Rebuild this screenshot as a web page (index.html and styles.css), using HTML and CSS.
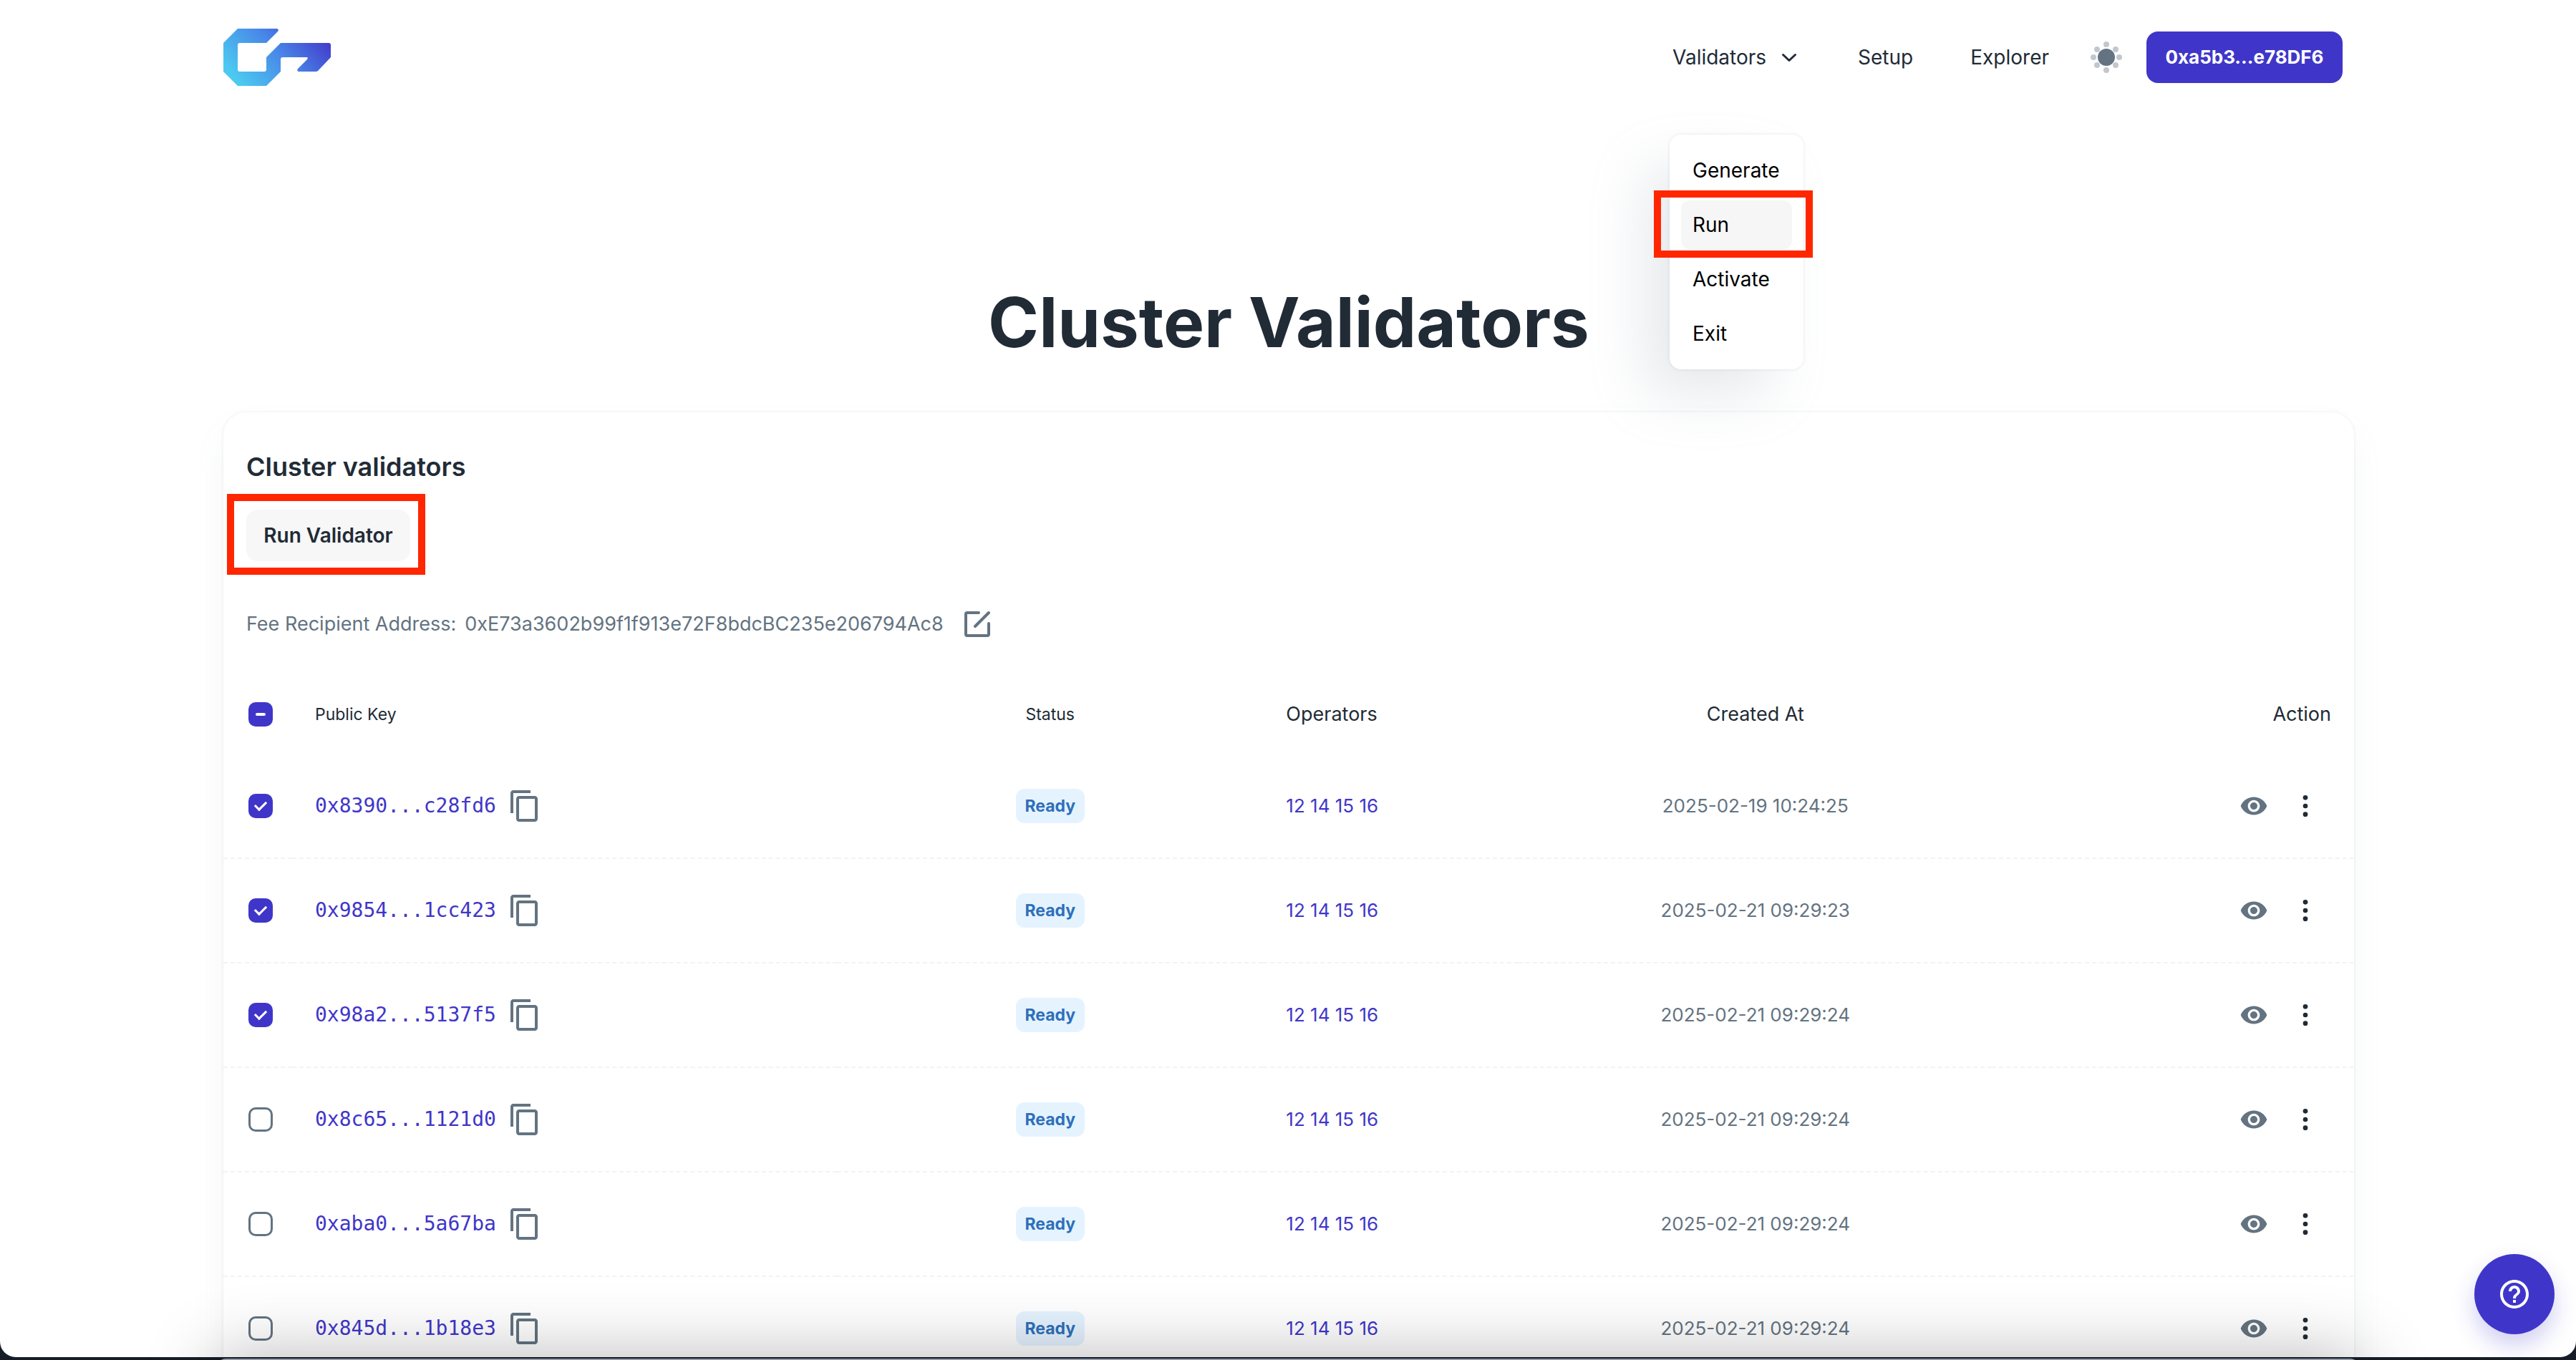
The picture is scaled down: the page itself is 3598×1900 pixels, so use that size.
FILE: index.html
```html
<!DOCTYPE html>
<html lang="en">
<head>
<meta charset="utf-8">
<meta name="viewport" content="width=device-width, initial-scale=1">
<title>Cluster Validators</title>
<link rel="stylesheet" href="styles.css">
</head>
<body>
<svg class="sprite" aria-hidden="true">
  <symbol id="copy" viewBox="0 0 24 24"><path d="M16 1H4c-1.1 0-2 .9-2 2v14h2V3h12V1zm3 4H8c-1.1 0-2 .9-2 2v14c0 1.1.9 2 2 2h11c1.1 0 2-.9 2-2V7c0-1.1-.9-2-2-2zm0 16H8V7h11v14z"/></symbol>
  <symbol id="eye" viewBox="0 0 24 24"><path d="M12 4.500C7 4.500 2.730 7.610 1 12c1.730 4.390 6 7.500 11 7.500s9.270-3.110 11-7.500c-1.730-4.390-6-7.500-11-7.500zM12 17c-2.760 0-5-2.240-5-5s2.240-5 5-5 5 2.240 5 5-2.240 5-5 5zm0-8c-1.660 0-3 1.340-3 3s1.340 3 3 3 3-1.340 3-3-1.340-3-3-3z"/></symbol>
  <symbol id="more" viewBox="0 0 24 24"><circle cx="12" cy="5" r="2"/><circle cx="12" cy="12" r="2"/><circle cx="12" cy="19" r="2"/></symbol>
</svg>

<div class="window">
  <header class="header">
    <a class="logo" href="#" aria-label="Home">
      <svg viewBox="0 0 150 80" width="150" height="80">
        <defs><linearGradient id="brand" gradientUnits="userSpaceOnUse" x1="20" y1="72" x2="122" y2="-16">
          <stop offset="0" stop-color="#4cc9f0"/><stop offset=".5" stop-color="#4888e8"/><stop offset="1" stop-color="#4338ca"/>
        </linearGradient></defs>
        <path fill="url(#brand)" d="M20 0H75Q78 1 76 4L60 20H23Q20 20 20 23V57Q20 60 23 60H57Q60 60 60 57V40L80 20H147Q150 20 150 23V40L132 59Q131 60 129 60H105Q102 59 104 56L117 43Q119 40 116 40H83Q80 40 80 43V60L60 80H20L0 60V20Z"/>
      </svg>
    </a>
    <nav class="nav">
      <div class="nav-item">
        <button class="nav-link" type="button" aria-expanded="true">Validators
          <svg viewBox="0 0 32 32" width="32" height="32"><path d="M7.500 12.500 16 20.500 24.500 12.500" fill="none" stroke="currentColor" stroke-width="3" stroke-linecap="round" stroke-linejoin="round"/></svg>
        </button>
        <div class="menu">
          <a href="#">Generate</a>
          <a class="active" href="#">Run</a>
          <a href="#">Activate</a>
          <a href="#">Exit</a>
          <span class="marker marker-menu"></span>
        </div>
      </div>
      <a class="nav-link" href="#">Setup</a>
      <a class="nav-link" href="#">Explorer</a>
    </nav>
    <button class="icon-button theme" type="button" aria-label="Toggle theme">
      <svg viewBox="0 0 48 48" width="48" height="48">
        <g fill="#c1c7cd"><circle cx="24" cy="6" r="4"/><circle cx="24" cy="42" r="4"/><circle cx="6" cy="24" r="4"/><circle cx="42" cy="24" r="4"/><circle cx="11" cy="13" r="4"/><circle cx="37" cy="13" r="4"/><circle cx="11" cy="35" r="4"/><circle cx="37" cy="35" r="4"/></g>
        <circle cx="24" cy="24" r="12" fill="#637381"/>
      </svg>
    </button>
    <button class="wallet" type="button">0xa5b3...e78DF6</button>
  </header>

  <main class="main">
    <h1>Cluster Validators</h1>
    <section class="card">
      <div class="card-head">
        <h2>Cluster validators</h2>
        <div class="run-wrap">
          <button class="run" type="button">Run Validator</button>
          <span class="marker marker-run"></span>
        </div>
        <div class="fee">
          <span>Fee Recipient Address:</span>
          <span>0xE73a3602b99f1f913e72F8bdcBC235e206794Ac8</span>
          <button class="icon-button edit" type="button" aria-label="Edit fee recipient address">
            <svg viewBox="0 0 48 48" width="48" height="48"><g fill="none" stroke="currentColor" stroke-width="4" stroke-linecap="round" stroke-linejoin="round"><path d="M25 8H9a2 2 0 0 0-2 2V38a2 2 0 0 0 2 2H37a2 2 0 0 0 2-2V23"/><path d="M20 27 39 8"/></g></svg>
          </button>
        </div>
      </div>
      <table class="validators">
        <colgroup><col class="c-check"><col><col class="c-status"><col class="c-ops"><col class="c-date"><col class="c-action"></colgroup>
        <thead>
          <tr>
            <th><input class="check mixed" type="checkbox" aria-label="Select all" aria-checked="mixed"></th>
            <th class="small">Public Key</th><th class="small center">Status</th><th>Operators</th><th class="center">Created At</th><th class="right">Action</th>
          </tr>
        </thead>
        <tbody>
          <tr>
            <td><input class="check" type="checkbox" aria-label="Select 0x8390...c28fd6" checked></td>
            <td><div class="key"><a href="#">0x8390...c28fd6</a><button class="icon-button" type="button" aria-label="Copy"><svg width="48" height="48"><use href="#copy"/></svg></button></div></td>
            <td class="center"><span class="badge">Ready</span></td>
            <td class="ops"><a href="#">12</a> <a href="#">14</a> <a href="#">15</a> <a href="#">16</a></td>
            <td class="date">2025-02-19 10:24:25</td>
            <td><div class="actions"><button class="icon-button" type="button" aria-label="View"><svg width="40" height="40"><use href="#eye"/></svg></button><button class="icon-button more" type="button" aria-label="More"><svg width="40" height="40"><use href="#more"/></svg></button></div></td>
          </tr>
          <tr>
            <td><input class="check" type="checkbox" aria-label="Select 0x9854...1cc423" checked></td>
            <td><div class="key"><a href="#">0x9854...1cc423</a><button class="icon-button" type="button" aria-label="Copy"><svg width="48" height="48"><use href="#copy"/></svg></button></div></td>
            <td class="center"><span class="badge">Ready</span></td>
            <td class="ops"><a href="#">12</a> <a href="#">14</a> <a href="#">15</a> <a href="#">16</a></td>
            <td class="date">2025-02-21 09:29:23</td>
            <td><div class="actions"><button class="icon-button" type="button" aria-label="View"><svg width="40" height="40"><use href="#eye"/></svg></button><button class="icon-button more" type="button" aria-label="More"><svg width="40" height="40"><use href="#more"/></svg></button></div></td>
          </tr>
          <tr>
            <td><input class="check" type="checkbox" aria-label="Select 0x98a2...5137f5" checked></td>
            <td><div class="key"><a href="#">0x98a2...5137f5</a><button class="icon-button" type="button" aria-label="Copy"><svg width="48" height="48"><use href="#copy"/></svg></button></div></td>
            <td class="center"><span class="badge">Ready</span></td>
            <td class="ops"><a href="#">12</a> <a href="#">14</a> <a href="#">15</a> <a href="#">16</a></td>
            <td class="date">2025-02-21 09:29:24</td>
            <td><div class="actions"><button class="icon-button" type="button" aria-label="View"><svg width="40" height="40"><use href="#eye"/></svg></button><button class="icon-button more" type="button" aria-label="More"><svg width="40" height="40"><use href="#more"/></svg></button></div></td>
          </tr>
          <tr>
            <td><input class="check" type="checkbox" aria-label="Select 0x8c65...1121d0"></td>
            <td><div class="key"><a href="#">0x8c65...1121d0</a><button class="icon-button" type="button" aria-label="Copy"><svg width="48" height="48"><use href="#copy"/></svg></button></div></td>
            <td class="center"><span class="badge">Ready</span></td>
            <td class="ops"><a href="#">12</a> <a href="#">14</a> <a href="#">15</a> <a href="#">16</a></td>
            <td class="date">2025-02-21 09:29:24</td>
            <td><div class="actions"><button class="icon-button" type="button" aria-label="View"><svg width="40" height="40"><use href="#eye"/></svg></button><button class="icon-button more" type="button" aria-label="More"><svg width="40" height="40"><use href="#more"/></svg></button></div></td>
          </tr>
          <tr>
            <td><input class="check" type="checkbox" aria-label="Select 0xaba0...5a67ba"></td>
            <td><div class="key"><a href="#">0xaba0...5a67ba</a><button class="icon-button" type="button" aria-label="Copy"><svg width="48" height="48"><use href="#copy"/></svg></button></div></td>
            <td class="center"><span class="badge">Ready</span></td>
            <td class="ops"><a href="#">12</a> <a href="#">14</a> <a href="#">15</a> <a href="#">16</a></td>
            <td class="date">2025-02-21 09:29:24</td>
            <td><div class="actions"><button class="icon-button" type="button" aria-label="View"><svg width="40" height="40"><use href="#eye"/></svg></button><button class="icon-button more" type="button" aria-label="More"><svg width="40" height="40"><use href="#more"/></svg></button></div></td>
          </tr>
          <tr>
            <td><input class="check" type="checkbox" aria-label="Select 0x845d...1b18e3"></td>
            <td><div class="key"><a href="#">0x845d...1b18e3</a><button class="icon-button" type="button" aria-label="Copy"><svg width="48" height="48"><use href="#copy"/></svg></button></div></td>
            <td class="center"><span class="badge">Ready</span></td>
            <td class="ops"><a href="#">12</a> <a href="#">14</a> <a href="#">15</a> <a href="#">16</a></td>
            <td class="date">2025-02-21 09:29:24</td>
            <td><div class="actions"><button class="icon-button" type="button" aria-label="View"><svg width="40" height="40"><use href="#eye"/></svg></button><button class="icon-button more" type="button" aria-label="More"><svg width="40" height="40"><use href="#more"/></svg></button></div></td>
          </tr>
        </tbody>
      </table>
    </section>
  </main>
  <button class="help" type="button" aria-label="Help">
    <svg viewBox="0 0 24 24" width="48" height="48"><path d="M11 18h2v-2h-2v2zm1-16C6.480 2 2 6.480 2 12s4.480 10 10 10 10-4.480 10-10S17.520 2 12 2zm0 18c-4.410 0-8-3.590-8-8s3.590-8 8-8 8 3.590 8 8-3.590 8-8 8zm0-14c-2.210 0-4 1.790-4 4h2c0-1.100.9-2 2-2s2 .9 2 2c0 2-3 1.750-3 5h2c0-2.250 3-2.500 3-5 0-2.210-1.790-4-4-4z"/></svg>
  </button>
</div>
<div class="dock"></div>
</body>
</html>
```
FILE: styles.css
```css
:root {
  --ink: #212b36;
  --muted: #637381;
  --primary: #3f36c9;
  --mark: #ff2600;
}

* { box-sizing: border-box; }

html { background: #171d26; }

body {
  margin: 0;
  height: 100vh;
  overflow: hidden;
  color: var(--ink);
  font: 400 27px/40px Inter, "Open Sans", sans-serif;
}

a { color: inherit; text-decoration: none; }

button {
  margin: 0;
  padding: 0;
  border: 0;
  background: none;
  color: inherit;
  font: inherit;
  cursor: pointer;
}

svg { display: block; flex: none; fill: currentColor; }

.sprite { position: absolute; width: 0; height: 0; }

.window {
  height: calc(100vh - 4px);
  overflow: hidden;
  background: #fff;
  border-radius: 0 0 22px 22px;
}

/* Header */
.header {
  display: flex;
  align-items: center;
  height: 160px;
  padding: 0 326px 0 312px;
}

.nav {
  display: flex;
  align-items: center;
  gap: 80px;
  margin-left: auto;
  font-size: 28px;
}

.nav-item { position: relative; }

.nav-link { display: flex; align-items: center; gap: 16px; }

.theme { margin: 0 32px 0 56px; }

.wallet {
  min-width: 274px;
  height: 72px;
  border-radius: 16px;
  background: var(--primary);
  color: #fff;
  font-size: 26px;
  font-weight: 700;
}

.icon-button { display: flex; color: var(--muted); }

.menu {
  position: absolute;
  z-index: 2;
  top: 128px;
  left: -4px;
  display: flex;
  flex-direction: column;
  gap: 8px;
  padding: 16px;
  border-radius: 16px;
  background: #fff;
  color: #000;
  box-shadow: 0 0 4px rgba(145, 158, 171, .24), -40px 40px 80px -8px rgba(145, 158, 171, .24);
}

.menu a {
  min-width: 155px;
  padding: 14px 16px;
  border-radius: 12px;
}

.menu .active { background: #f6f6f6; }

.marker {
  position: absolute;
  border: 10px solid var(--mark);
  pointer-events: none;
}

.marker-menu { top: 78px; right: -13px; left: -22px; height: 94px; }

.marker-run { inset: -22px -21px -19px -27px; }

/* Page */
.main { padding: 230px 310px 0 312px; }

h1, h2 { margin: 0; }

h1 {
  margin-bottom: 66px;
  font-size: 96px;
  font-weight: 700;
  line-height: 120px;
  text-align: center;
}

h2 { font-size: 36px; font-weight: 600; line-height: 48px; }

.card {
  border-radius: 32px;
  background: #fff;
  box-shadow: 0 0 4px rgba(145, 158, 171, .2), 0 24px 48px -8px rgba(145, 158, 171, .12);
}

.card-head { padding: 52px 32px 46px; }

.run-wrap { position: relative; width: fit-content; margin: 36px 0 64px; }

.run {
  display: block;
  min-width: 229px;
  height: 72px;
  border-radius: 16px;
  background: #f7f7f7;
  font-size: 28px;
  font-weight: 600;
}

.fee {
  display: flex;
  align-items: center;
  gap: 12px;
  color: var(--muted);
}

.edit { margin-left: 12px; }

/* Table */
.validators {
  width: 100%;
  table-layout: fixed;
  border-spacing: 0;
}

.c-check { width: 96px; }
.c-status { width: 20%; }
.c-ops { width: 12%; }
.c-date { width: 22.2%; }
.c-action { width: 17%; }

.validators th {
  height: 112px;
  padding: 0 32px;
  font-weight: 400;
  text-align: left;
}

.validators td {
  height: 146px;
  padding: 0 32px;
  border-bottom: 2px dashed #f2f3f4;
}

.validators .small { font-size: 23px; }
.validators .center { text-align: center; }
.validators .right { text-align: right; }

.validators .date {
  color: var(--muted);
  font-size: 26px;
  text-align: center;
}

.ops { color: var(--primary); font-size: 26px; }

.check {
  display: flex;
  align-items: center;
  justify-content: center;
  width: 34px;
  height: 34px;
  margin: 0 0 0 3px;
  border: 3px solid var(--muted);
  border-radius: 10px;
  background: #fff;
  appearance: none;
}

.check:checked, .check.mixed {
  border-color: var(--primary);
  background: var(--primary);
}

.check:checked::before {
  content: "";
  width: 13px;
  height: 7px;
  margin-bottom: 4px;
  border: solid #fff;
  border-width: 0 0 3px 3px;
  transform: rotate(-45deg);
}

.check.mixed::before {
  content: "";
  width: 14px;
  height: 4px;
  border-radius: 2px;
  background: #fff;
}

.key {
  display: flex;
  align-items: center;
  gap: 16px;
  color: var(--primary);
  font: 28px/40px "DejaVu Sans Mono", monospace;
}

.badge {
  display: inline-block;
  min-width: 96px;
  border-radius: 12px;
  background: #e5f3ff;
  color: #2e6fba;
  font-size: 23px;
  font-weight: 700;
  line-height: 48px;
  vertical-align: middle;
}

.actions { display: flex; justify-content: flex-end; gap: 32px; padding-right: 16px; }

.more { color: var(--ink); }

.help {
  position: fixed;
  right: 30px;
  bottom: 36px;
  display: flex;
  align-items: center;
  justify-content: center;
  width: 112px;
  height: 112px;
  border-radius: 50%;
  background: var(--primary);
  color: #fff;
  box-shadow: 0 16px 32px rgba(63, 54, 201, .24);
}

/* Desktop dock peeking in below the window */
.dock {
  position: fixed;
  right: 300px;
  bottom: -118px;
  left: 300px;
  height: 120px;
  border-radius: 16px;
  background: #8d99a8;
  box-shadow: 0 0 100px rgba(0, 0, 0, .3);
  pointer-events: none;
}
```
